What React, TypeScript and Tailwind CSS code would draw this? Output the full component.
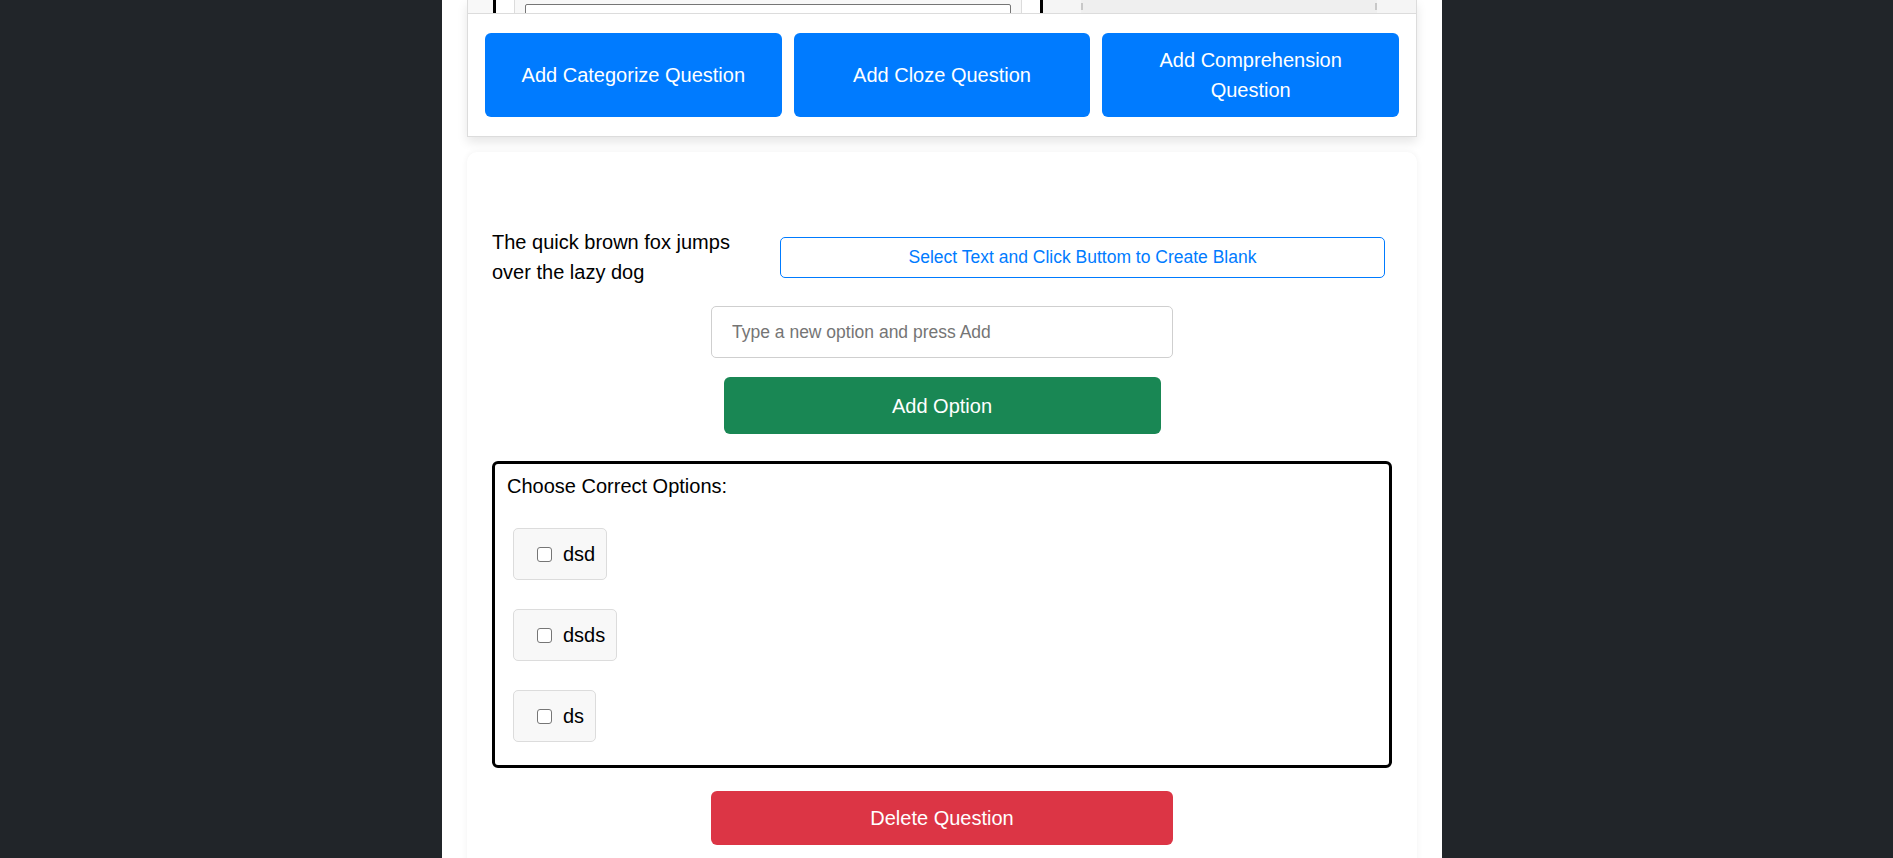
const font = { fontFamily: '"Liberation Sans", Arial, sans-serif' };

function TopStrip() {
  return (
    <div className="flex h-[14px] overflow-hidden border-b border-[#dcdcdc] bg-[#f8f8f8]">
      <div className="w-[25px] shrink-0" />
      <div className="w-[3px] shrink-0 bg-black" />
      <div className="w-[18px] shrink-0 bg-white" />
      <div className="flex w-[508px] shrink-0 border-l border-r border-[#dcdcdc] bg-[#f8f8f8] px-[10px] pt-[4px]">
        <div className="h-[20px] w-full rounded-t-[2px] border border-[#767676] bg-white" />
      </div>
      <div className="w-[18px] shrink-0 bg-white" />
      <div className="w-[3px] shrink-0 bg-black" />
      <div className="flex flex-1 bg-[#f5f5f5]">
        <div className="w-[38px] shrink-0" />
        <div className="flex flex-1 items-start justify-between bg-[#efefef]">
          <div className="mt-[3px] h-[7px] w-[2px] bg-[#c8c8c8]" />
          <div className="mt-[3px] h-[7px] w-[2px] bg-[#c8c8c8]" />
        </div>
        <div className="w-[39px] shrink-0" />
      </div>
    </div>
  );
}

function Chip({ label }: { label: string }) {
  return (
    <div className="flex h-[52px] items-center rounded-[5px] border border-[#dcdcdc] bg-[#f8f8f8] pl-[23px] pr-[11px]">
      <span className="h-[15px] w-[15px] rounded-[3px] border border-[#767676] bg-white" />
      <span className="ml-[11px] text-[20px] leading-[30px] text-black">{label}</span>
    </div>
  );
}

export default function App() {
  return (
    <div className="min-h-screen bg-[#212529]" style={font}>
      <div className="ml-[442px] h-[858px] w-[1000px] overflow-hidden bg-white px-[25px]">
        <div className="border-l border-r border-b border-[#dcdcdc] bg-white shadow-[0_5px_10px_rgba(0,0,0,0.1)]">
          <TopStrip />
          <div className="flex gap-[12px] px-[17px] pb-[19px] pt-[19px]">
            {["Add Categorize Question", "Add Cloze Question", "Add Comprehension Question"].map((t) => (
              <button
                key={t}
                className="flex flex-1 items-center justify-center rounded-[6px] bg-[#007bff] px-[15px] py-[12px] text-center text-[20px] leading-[30px] text-white"
              >
                {t}
              </button>
            ))}
          </div>
        </div>

        <div className="mt-[15px] rounded-[10px] bg-white px-[25px] pt-[75px] pb-[40px] shadow-[0_0_6px_rgba(0,0,0,0.06)]">
          <div className="flex items-center pr-[7px]">
            <p className="w-[262px] text-[20px] leading-[30px] text-black">
              The quick brown fox jumps over the lazy dog
            </p>
            <button className="ml-[26px] flex h-[41px] flex-1 items-center justify-center rounded-[5px] border border-[#007bff] text-[17.5px] text-[#007bff]">
              Select Text and Click Buttom to Create Blank
            </button>
          </div>

          <div className="mt-[19px] flex justify-center">
            <input
              className="h-[52px] w-[462px] rounded-[5px] border border-[#cfcfcf] px-[20px] text-[17.5px] text-black outline-none placeholder:text-[#757575]"
              placeholder="Type a new option and press Add"
            />
          </div>

          <div className="mt-[19px] flex justify-center">
            <button className="h-[57px] w-[437px] rounded-[6px] bg-[#198754] text-[20px] text-white">
              Add Option
            </button>
          </div>

          <div className="mt-[27px] rounded-[6px] border-[3px] border-black px-[12px] pb-[23px] pt-[7px]">
            <p className="text-[20px] leading-[30px] text-black">Choose Correct Options:</p>
            <div className="ml-[6px] mt-[27px] flex flex-col items-start gap-[29px]">
              {["dsd", "dsds", "ds"].map((o) => (
                <Chip key={o} label={o} />
              ))}
            </div>
          </div>

          <div className="mt-[23px] flex justify-center">
            <button className="h-[54px] w-[462px] rounded-[6px] bg-[#dc3545] text-[20px] text-white">
              Delete Question
            </button>
          </div>
        </div>
      </div>
    </div>
  );
}
